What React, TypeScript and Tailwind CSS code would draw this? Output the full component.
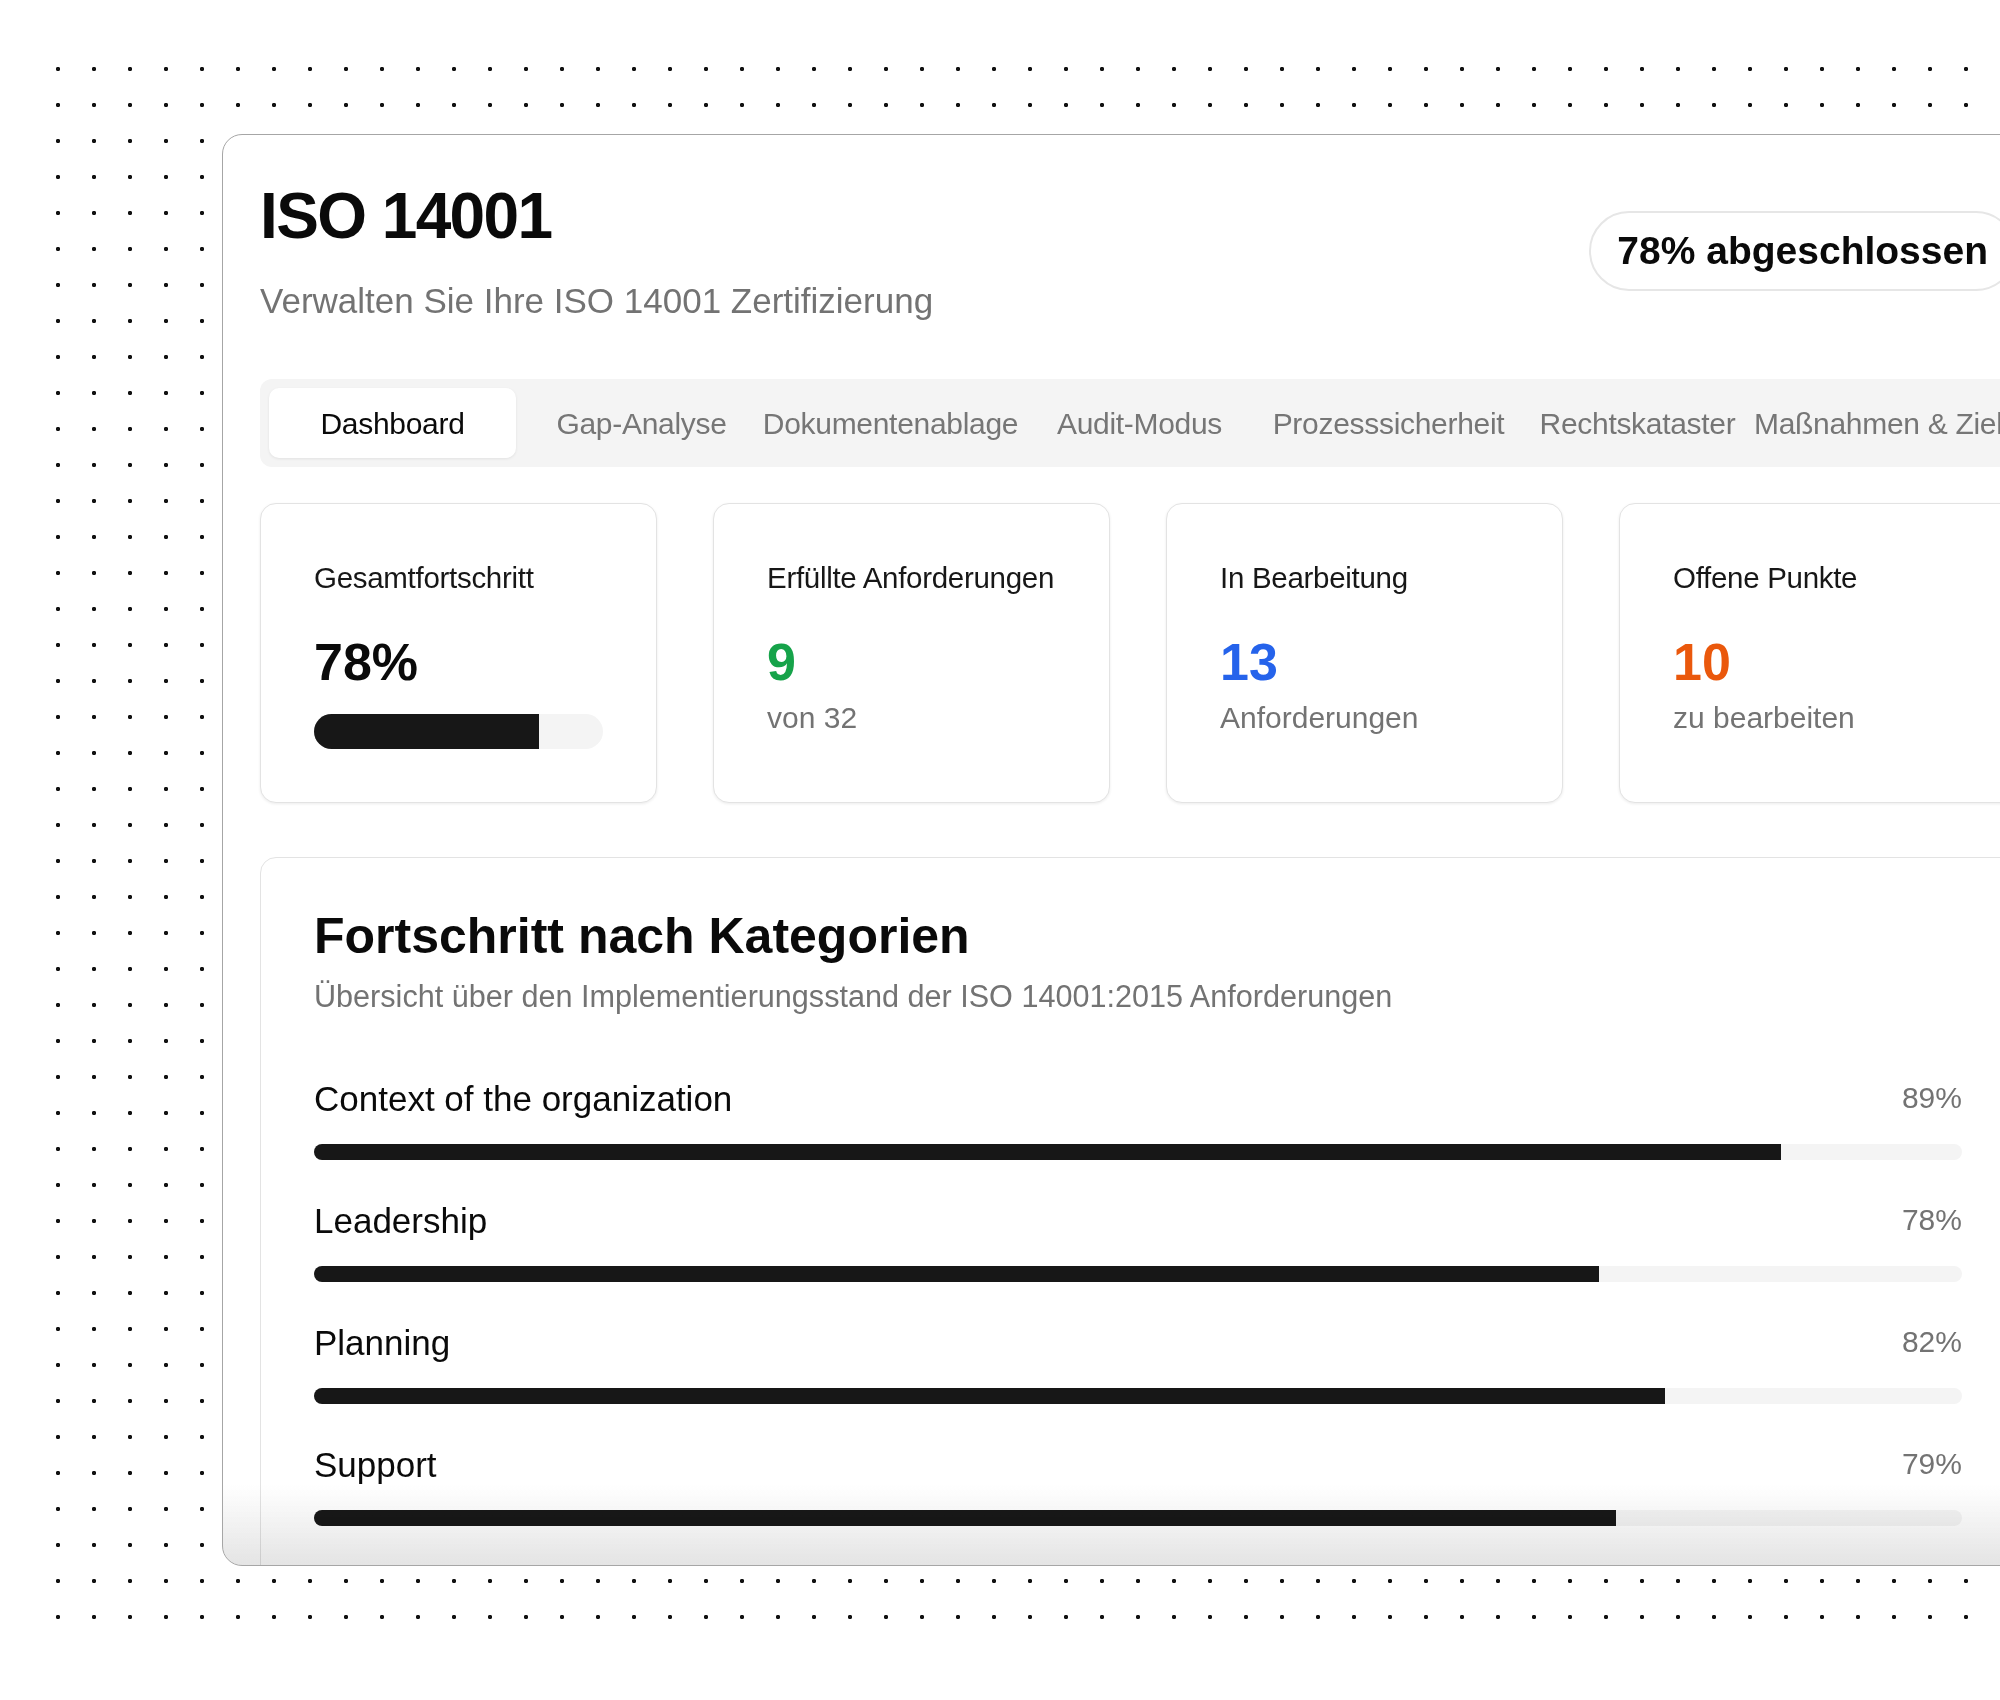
import React from 'react';

const tabs = [
  'Dashboard',
  'Gap-Analyse',
  'Dokumentenablage',
  'Audit-Modus',
  'Prozesssicherheit',
  'Rechtskataster',
  'Maßnahmen & Ziele',
  'Schulungen',
];

const categories = [
  { name: 'Context of the organization', value: 89 },
  { name: 'Leadership', value: 78 },
  { name: 'Planning', value: 82 },
  { name: 'Support', value: 79 },
  { name: 'Operation', value: 71 },
  { name: 'Performance evaluation', value: 68 },
];

function StatCard({
  label,
  value,
  valueClass,
  sub,
  progress,
}: {
  label: string;
  value: string;
  valueClass: string;
  sub?: string;
  progress?: number;
}) {
  return (
    <div className="bg-white border border-[#e3e3e3] rounded-2xl shadow-[0_1px_3px_rgba(0,0,0,0.08)] p-[53px] flex flex-col">
      <p className="text-[29.5px] leading-[42px] text-[#171717] tracking-[-0.01em]">{label}</p>
      <p className={`mt-[37px] text-[52px] leading-none font-bold ${valueClass}`}>{value}</p>
      {sub && <p className="mt-[15px] text-[30px] leading-none text-[#737373]">{sub}</p>}
      {progress !== undefined && (
        <div className="mt-[26px] h-[35px] w-full rounded-full bg-[#f4f4f4] overflow-hidden">
          <div className="h-full bg-[#171717]" style={{ width: `${progress}%` }} />
        </div>
      )}
    </div>
  );
}

export default function App() {
  return (
    <div className="w-[2000px] h-[1700px] overflow-hidden bg-white font-['Liberation_Sans',Arial,sans-serif] pl-[40px] pt-[51px]">
      <div className="w-[1944px] h-[1584px] bg-[radial-gradient(circle,_#111_1.9px,_transparent_2.4px)] bg-[length:36px_36px] pl-[182px] pt-[83px]">
        <div className="relative w-[1832px] h-[1432px] bg-white border border-[#a6a6a6] rounded-[20px] overflow-hidden pl-[37px] pr-[37px] pt-[49px]">
          {/* header */}
          <div className="flex items-center justify-between">
            <div>
              <h1 className="text-[64px] leading-none font-bold tracking-tight text-[#0a0a0a]">ISO 14001</h1>
              <p className="mt-[35px] text-[35px] leading-none text-[#737373]">
                Verwalten Sie Ihre ISO 14001 Zertifizierung
              </p>
            </div>
            <div className="h-[80px] flex items-center px-[26px] rounded-full border-2 border-[#e6e6e6] bg-white">
              <span className="text-[39px] font-bold text-[#0a0a0a] whitespace-nowrap">78% abgeschlossen</span>
            </div>
          </div>

          {/* tabs */}
          <div className="mt-[61px] h-[88px] rounded-[12px] bg-[#f4f4f4] p-[9px] flex gap-[2px]">
            {tabs.map((t, i) => (
              <div
                key={t}
                className={`w-[247px] shrink-0 h-full flex items-center justify-center whitespace-nowrap text-[30px] tracking-[-0.01em] ${
                  i === 0
                    ? 'bg-white rounded-[10px] shadow-[0_1px_3px_rgba(0,0,0,0.08)] text-[#0a0a0a]'
                    : 'text-[#767676]'
                }`}
              >
                {t}
              </div>
            ))}
          </div>

          {/* stats */}
          <div className="mt-[36px] grid grid-cols-4 gap-[56px]">
            <StatCard label="Gesamtfortschritt" value="78%" valueClass="text-[#0a0a0a]" progress={78} />
            <StatCard label="Erfüllte Anforderungen" value="9" valueClass="text-[#16a34a]" sub="von 32" />
            <StatCard label="In Bearbeitung" value="13" valueClass="text-[#2563eb]" sub="Anforderungen" />
            <StatCard label="Offene Punkte" value="10" valueClass="text-[#ea580c]" sub="zu bearbeiten" />
          </div>

          {/* categories */}
          <div className="mt-[54px] bg-white border border-[#e3e3e3] rounded-2xl p-[53px]">
            <h2 className="text-[50px] leading-none font-bold text-[#0a0a0a]">Fortschritt nach Kategorien</h2>
            <p className="mt-[20px] text-[30.6px] leading-none text-[#737373]">
              Übersicht über den Implementierungsstand der ISO 14001:2015 Anforderungen
            </p>
            <div className="mt-[69px] flex flex-col gap-[43px]">
              {categories.map((c) => (
                <div key={c.name}>
                  <div className="flex items-center justify-between">
                    <span className="text-[35px] leading-none text-[#0a0a0a]">{c.name}</span>
                    <span className="text-[30px] leading-none text-[#737373]">{c.value}%</span>
                  </div>
                  <div className="mt-[28px] h-[16px] w-full rounded-full bg-[#f4f4f4] overflow-hidden">
                    <div className="h-full bg-[#171717]" style={{ width: `${c.value}%` }} />
                  </div>
                </div>
              ))}
            </div>
          </div>

          {/* bottom fade */}
          <div className="absolute left-0 right-0 bottom-0 h-[80px] bg-linear-to-t from-[#e4e4e4] to-transparent mix-blend-multiply pointer-events-none" />
        </div>
      </div>
    </div>
  );
}
